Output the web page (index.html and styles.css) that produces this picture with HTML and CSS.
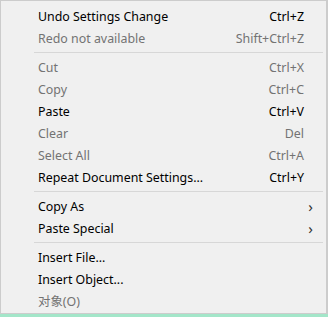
FILE: index.html
```html
<!DOCTYPE html>
<html lang="en">
<head>
    <meta charset="UTF-8">
    <title>Menu</title>
    <link rel="stylesheet" href="styles.css">
</head>
<body>
    <div class="menu">
        <div class="item"><span class="label">Undo Settings Change</span><span class="key">Ctrl+Z</span></div>
        <div class="item off"><span class="label">Redo not available</span><span class="key">Shift+Ctrl+Z</span></div>
        <div class="sep"></div>
        <div class="item off"><span class="label">Cut</span><span class="key">Ctrl+X</span></div>
        <div class="item off"><span class="label">Copy</span><span class="key">Ctrl+C</span></div>
        <div class="item"><span class="label">Paste</span><span class="key">Ctrl+V</span></div>
        <div class="item off"><span class="label">Clear</span><span class="key">Del</span></div>
        <div class="item off"><span class="label">Select All</span><span class="key">Ctrl+A</span></div>
        <div class="item"><span class="label">Repeat Document Settings...</span><span class="key">Ctrl+Y</span></div>
        <div class="sep"></div>
        <div class="item sub"><span class="label">Copy As</span><span class="arrow">&#8250;</span></div>
        <div class="item sub"><span class="label">Paste Special</span><span class="arrow">&#8250;</span></div>
        <div class="sep"></div>
        <div class="item"><span class="label">Insert File...</span></div>
        <div class="item"><span class="label">Insert Object...</span></div>
        <div class="item off"><span class="label">对象(O)</span></div>
    </div>
    <div class="strip"></div>
</body>
</html>
```

FILE: styles.css
```css
* { box-sizing: border-box; }
body { margin: 0; background: #fff; font-family: 'Noto Sans', 'Noto Sans CJK SC', sans-serif; font-size: 12.4px; color: #000; }
.menu { width: 328px; height: 314px; background: #f0f0f0; border: 1px solid #cccccc; border-right-width: 2px; padding: 4px 0 0 0; }
.item { display: flex; align-items: center; height: 22px; padding: 0 22px 0 37px; }
.label { flex: 1; white-space: nowrap; }
.key { white-space: nowrap; }
.off { color: #737373; }
.sub { padding-right: 13px; }
.arrow { font-size: 15px; color: #333; }
.sep { height: 7px; display: flex; align-items: center; padding: 0 3px 0 33px; }
.sep::after { content: ''; flex: 1; height: 1px; background: #d7d7d7; }
.strip { height: 3px; background: #a3e6c9; }
```
